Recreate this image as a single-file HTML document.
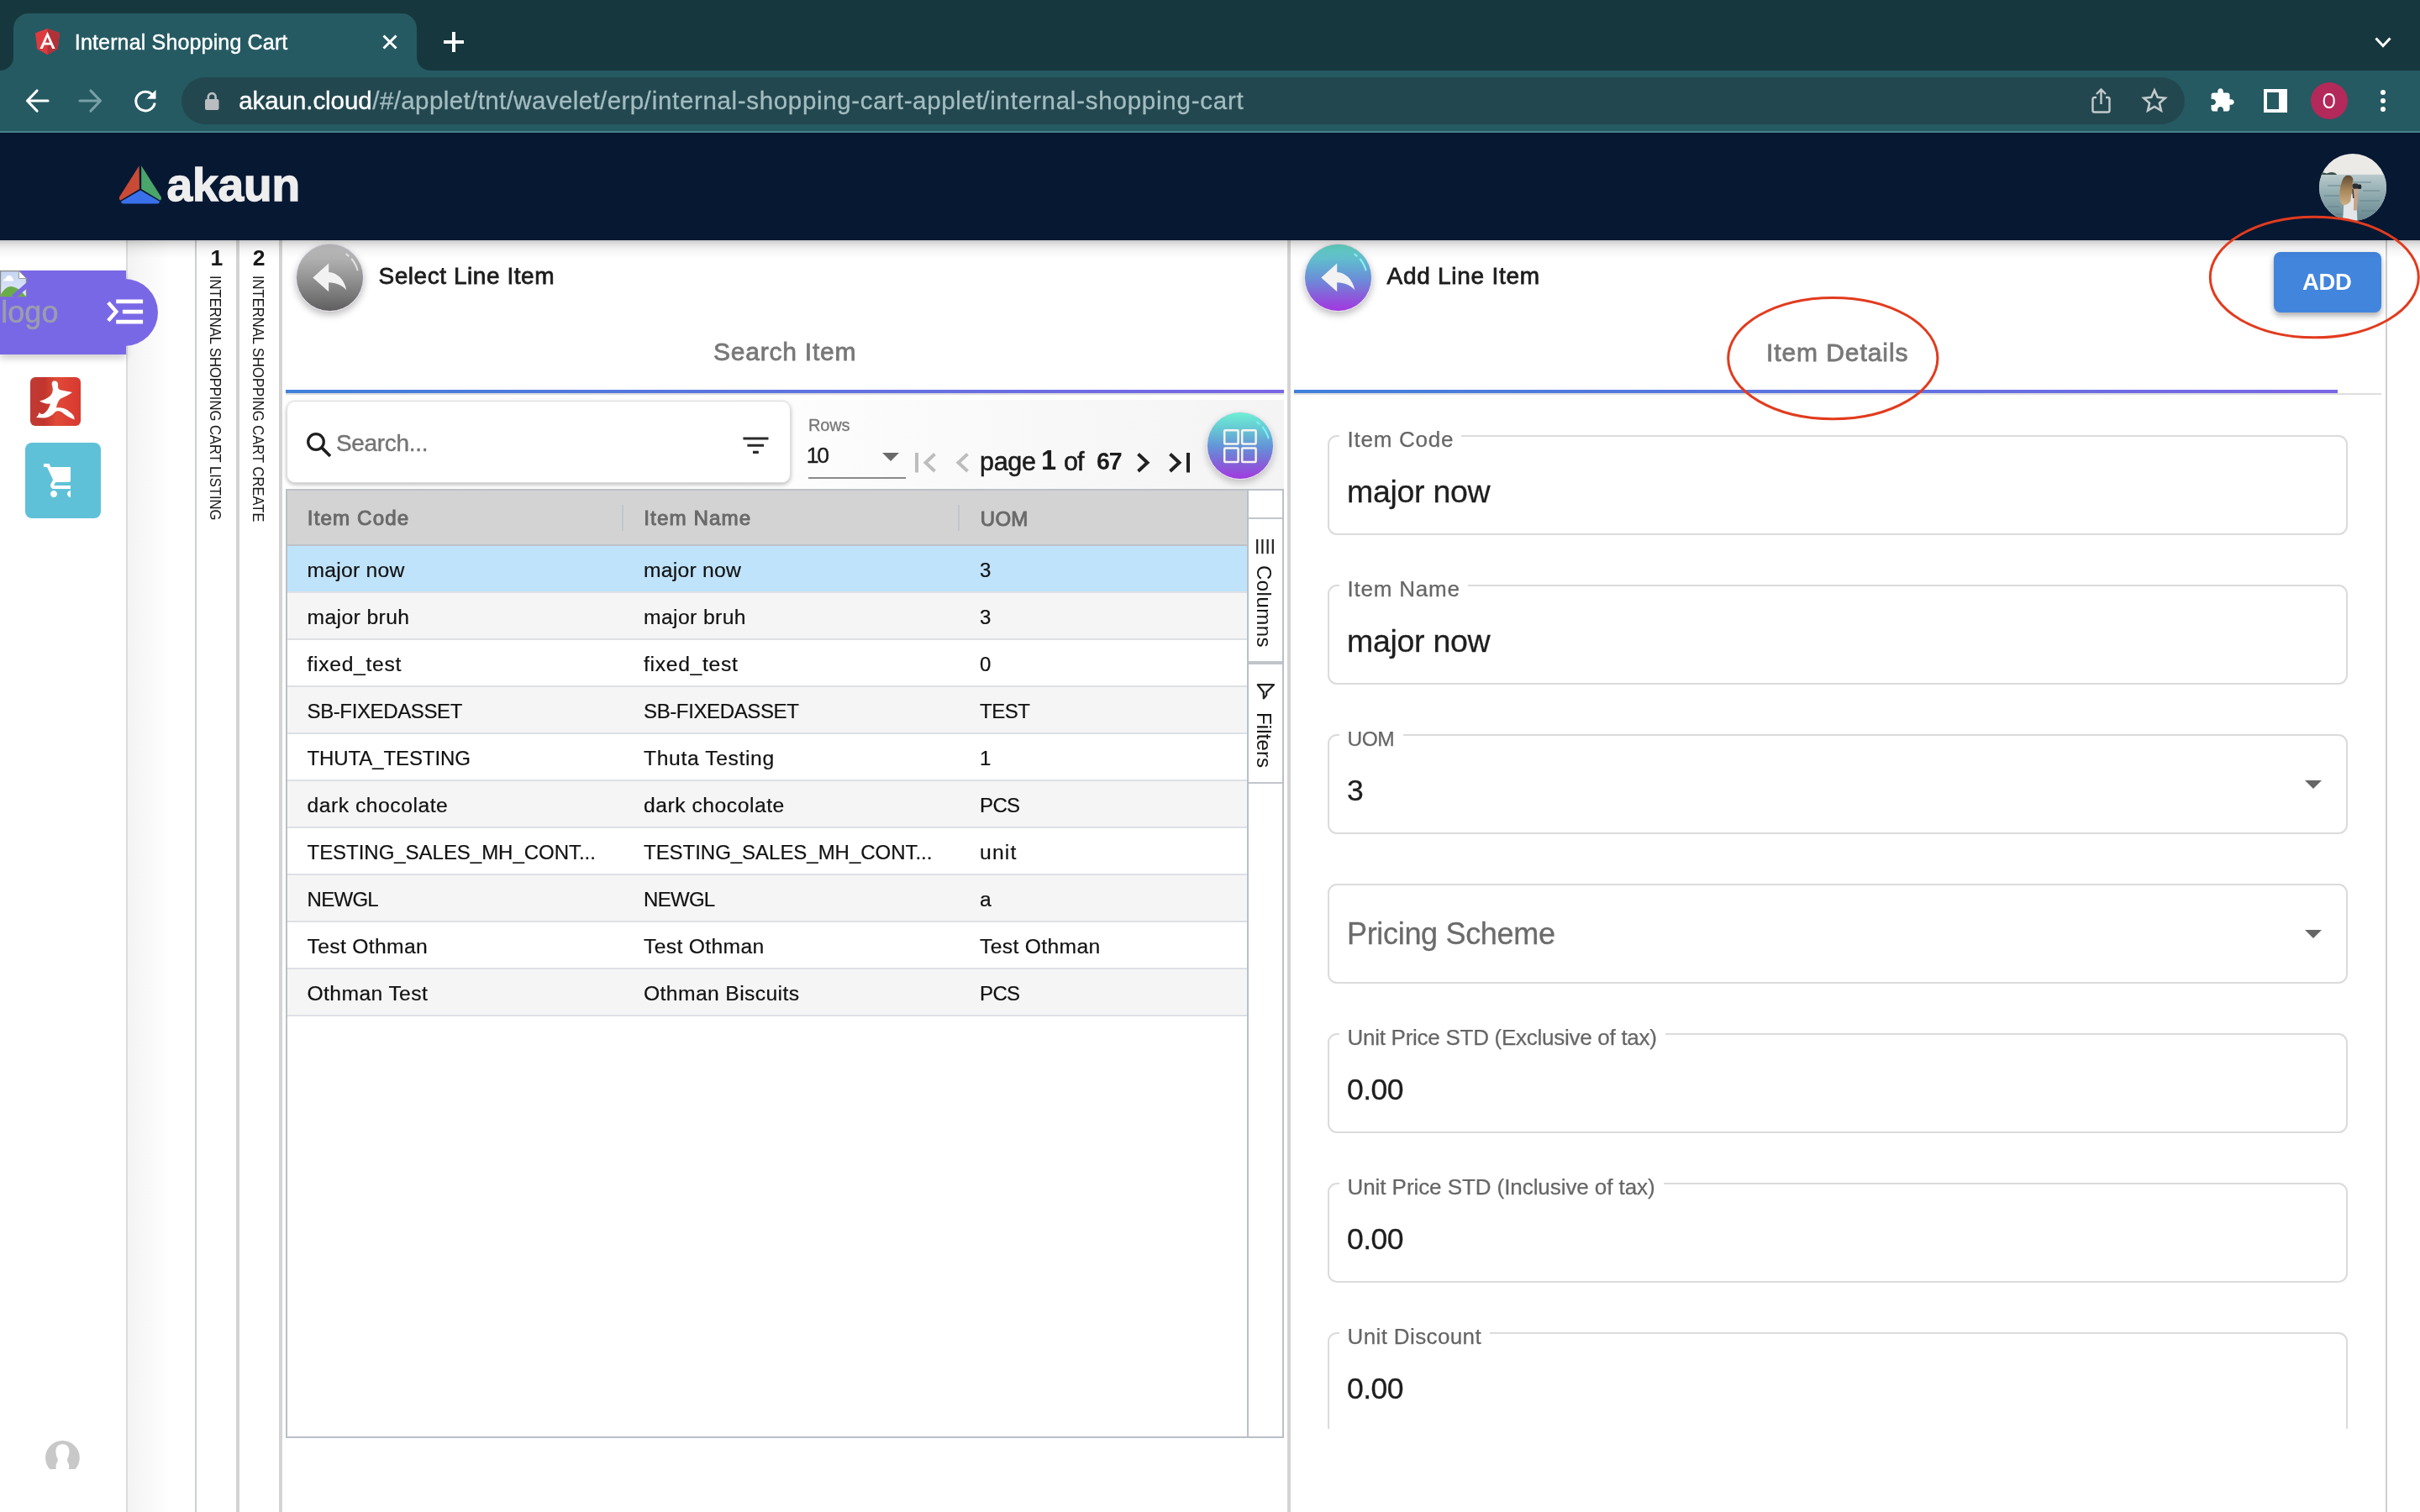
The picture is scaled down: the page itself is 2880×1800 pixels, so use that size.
<!DOCTYPE html>
<html lang="en"><head><meta charset="utf-8"><title>Internal Shopping Cart</title><style>
html,body{margin:0;padding:0;}
body{width:2880px;height:1800px;position:relative;overflow:hidden;background:#fff;font-family:"Liberation Sans",sans-serif;}
.a{position:absolute;}
.t{position:absolute;white-space:nowrap;line-height:1;}
#root{position:absolute;left:0;top:0;width:2880px;height:1800px;overflow:hidden;will-change:transform;}
svg{position:absolute;overflow:visible;}
</style></head><body>
<div id="root">
<div class="a" style="left:0px;top:0px;width:2880px;height:84px;background:#17373e;"></div>
<div class="a" style="left:0px;top:84px;width:2880px;height:74px;background:#255a62;"></div>
<div class="a" style="left:0px;top:156px;width:2880px;height:2px;background:#47828a;"></div>
<div class="a" style="left:16px;top:16px;width:480px;height:70px;background:#255a62;border-radius:18px 18px 0 0;"></div>
<svg style="left:0;top:68px" width="16" height="16"><path d="M16 0V16H0A16 16 0 0 0 16 0Z" fill="#255a62"/></svg>
<svg style="left:496px;top:68px" width="16" height="16"><path d="M0 0V16H16A16 16 0 0 1 0 0Z" fill="#255a62"/></svg>
<svg style="left:41px;top:34px" width="31" height="33" viewBox="0 0 250 266"><path d="M125 0L8 42l18 154 99 55 99-55 18-154z" fill="#dd3a3f"/><path d="M125 0v251l99-55 18-154z" fill="#b13138"/><path d="M125 30L52 194h27l15-37h62l15 37h27L125 30zm21 105h-43l22-52 21 52z" fill="#fff"/></svg>
<span class="t" style="left:88.8px;top:37.6px;font-size:25px;color:#fff;letter-spacing:0.16px;-webkit-text-stroke:0.45px #fff;">Internal Shopping Cart</span>
<svg style="left:455px;top:41px" width="18" height="18"><path d="M1.5 1.5L16.5 16.5M16.5 1.5L1.5 16.5" stroke="#fff" stroke-width="3" fill="none"/></svg>
<svg style="left:528px;top:38px" width="24" height="24"><path d="M12 0V24M0 12H24" stroke="#fff" stroke-width="4" fill="none"/></svg>
<svg style="left:2826px;top:44px" width="20" height="13"><path d="M1.5 1.5L10 10.5L18.5 1.5" stroke="#fff" stroke-width="3" fill="none"/></svg>
<svg style="left:30px;top:106px" width="28" height="28"><path d="M27 14H3M14 2L2.500 14L14 26" stroke="#fff" stroke-width="3.200" fill="none" stroke-linecap="round" stroke-linejoin="round"/></svg>
<svg style="left:94px;top:106px" width="28" height="28"><path d="M1 14H25M14 2L25.500 14L14 26" stroke="#78a0a6" stroke-width="3.200" fill="none" stroke-linecap="round" stroke-linejoin="round"/></svg>
<svg style="left:158px;top:106px" width="29" height="28"><path d="M23.500 7A11.300 11.300 0 1 0 26.200 16.500" stroke="#fff" stroke-width="3" fill="none"/><path d="M27.500 1V11.800H16.700Z" fill="#fff"/></svg>
<div class="a" style="left:216px;top:92px;width:2384px;height:56px;background:#23474f;border-radius:28px;"></div>
<svg style="left:244px;top:109px" width="17" height="23"><rect x="0" y="9" width="16.5" height="13" rx="2" fill="#b9bdc1"/><path d="M3.8 10V6.5a4.4 4.4 0 0 1 8.8 0V10" stroke="#b9bdc1" stroke-width="2.6" fill="none"/></svg>
<span class="t" style="left:284.2px;top:105.4px;font-size:29.5px;color:#fff;letter-spacing:-0.06px;-webkit-text-stroke:0.35px #fff;">akaun.cloud</span>
<span class="t" style="left:443.3px;top:105.4px;font-size:29.5px;color:#a3bcc0;letter-spacing:0.40px;-webkit-text-stroke:0.3px #a3bcc0;">/#/applet/tnt/wavelet/erp/</span>
<span class="t" style="left:775.8px;top:105.4px;font-size:29.5px;color:#a3bcc0;letter-spacing:0.66px;-webkit-text-stroke:0.3px #a3bcc0;">internal-shopping-cart-applet</span>
<span class="t" style="left:1169.3px;top:105.4px;font-size:29.5px;color:#a3bcc0;letter-spacing:0.77px;-webkit-text-stroke:0.3px #a3bcc0;">/internal-shopping-cart</span>
<svg style="left:2489px;top:105px" width="23" height="30"><path d="M6 11H3.5a2 2 0 0 0-2 2V26.5a2 2 0 0 0 2 2h16a2 2 0 0 0 2-2V13a2 2 0 0 0-2-2H17" stroke="#c3cacc" stroke-width="2.4" fill="none"/><path d="M11.5 19V2M6 7L11.5 1.5L17 7" stroke="#c3cacc" stroke-width="2.4" fill="none"/></svg>
<svg style="left:2549px;top:105px" width="30" height="29" viewBox="0 0 30 29"><path d="M15 2.5l3.7 8.3 9 .9-6.8 6 2 8.9L15 22l-7.9 4.6 2-8.9-6.8-6 9-.9z" stroke="#c3cacc" stroke-width="2.6" fill="none" stroke-linejoin="miter"/></svg>
<svg style="left:2629px;top:104px" width="31" height="31" viewBox="0 0 24 24"><path d="M20.5 11H19V7c0-1.1-.9-2-2-2h-4V3.5C13 2.12 11.88 1 10.5 1S8 2.12 8 3.5V5H4c-1.1 0-1.99.9-1.99 2v3.8H3.5c1.49 0 2.7 1.21 2.7 2.7s-1.21 2.7-2.7 2.7H2V20c0 1.1.9 2 2 2h3.8v-1.5c0-1.49 1.21-2.7 2.7-2.7 1.49 0 2.7 1.21 2.7 2.7V22H17c1.1 0 2-.9 2-2v-4h1.5c1.38 0 2.5-1.12 2.5-2.5S21.88 11 20.5 11z" fill="#fff"/></svg>
<div class="a" style="left:2694px;top:106px;width:28px;height:28px;background:#fff;"></div>
<div class="a" style="left:2698px;top:110px;width:13.5px;height:20px;background:#255a62;"></div>
<div class="a" style="left:2750px;top:98px;width:44px;height:44px;background:#b3295a;border-radius:50%;"></div>
<span class="t" style="left:2762.3px;top:108.0px;font-size:25px;color:#fff;transform:scaleX(.82);transform-origin:50% 50%;">O</span>
<div class="a" style="left:2833px;top:107.4px;width:6px;height:6px;background:#fff;border-radius:50%;"></div>
<div class="a" style="left:2833px;top:117.4px;width:6px;height:6px;background:#fff;border-radius:50%;"></div>
<div class="a" style="left:2833px;top:127.4px;width:6px;height:6px;background:#fff;border-radius:50%;"></div>
<div class="a" style="left:0px;top:158px;width:2880px;height:128px;background:#071833;"></div>
<svg style="left:140px;top:195px" width="54" height="50" viewBox="140 195 54 50"><path d="M165.6 197.2 L142.2 234.2 Q141.2 237.5 143.5 238.6 L166 225 Z" fill="#c94a35"/><path d="M168.2 197.2 L191.8 234.4 Q192.6 237.6 190.4 238.6 L168.2 225 Z" fill="#4aa56a"/><path d="M167.1 226.6 L144.2 239.8 Q144 242.4 147 242.6 L187 242.6 Q190 242.4 189.9 239.8 Z" fill="#3a70ea"/></svg>
<span class="t" style="left:198.6px;top:192.6px;font-size:55px;color:#eeeeee;font-weight:bold;letter-spacing:-0.09px;-webkit-text-stroke:1.4px #eeeeee;">akaun</span>
<svg style="left:2760px;top:182.600px" width="80" height="80" viewBox="0 0 80 80"><defs><clipPath id="avc"><circle cx="40" cy="40" r="40"/></clipPath><linearGradient id="sea" x1="0" y1="0" x2="0" y2="1"><stop offset="0" stop-color="#b9cacc"/><stop offset=".35" stop-color="#97b0b4"/><stop offset="1" stop-color="#64868c"/></linearGradient><linearGradient id="hair" x1="0" y1="0" x2="0" y2="1"><stop offset="0" stop-color="#5f4a33"/><stop offset=".5" stop-color="#a8875a"/><stop offset="1" stop-color="#cdb086"/></linearGradient></defs><g clip-path="url(#avc)"><rect width="80" height="80" fill="#eceae6"/><rect y="24.800" width="80" height="56" fill="url(#sea)"/><path d="M0 24.900V23.200Q5 21.600 9 23.600Q14 21 18.500 22.800Q20.500 23.600 21 24.900Z" fill="#3c5148"/><path d="M10 38h16M40 34h22M52 44h20M6 50h18M48 56h24M10 63h14M50 68h18M20 72h12" stroke="#5b7e85" stroke-width="1.600" opacity=".55"/><path d="M28 80L29.500 58Q31 48 36 46.500L44 50L45.500 80Z" fill="#e2e6e8"/><path d="M40.500 41.500L46.500 41L46 52Q45.500 61 44.800 67.500L40.800 67.500Q41.500 57 41 50Z" fill="#c9a287"/><path d="M38.500 34Q42 34 42 38L41 45H38Z" fill="#d9aa8e"/><path d="M33 25.700Q39.500 25 40.500 31Q39 36 39.500 42Q38 50 37.500 56Q35 61 29 61.500Q25 60 24.500 52Q24 40 27.500 32Q29.500 26.500 33 25.700Z" fill="url(#hair)"/><rect x="39.600" y="35.400" width="7" height="6.400" rx="1.800" fill="#2b3034"/><rect x="45.800" y="36.400" width="4.400" height="5.600" rx="1.600" fill="#22272b"/><path d="M40 42L40.800 53" stroke="#2b3034" stroke-width="1.400"/></g></svg>
<div class="a" style="left:150px;top:286px;width:2px;height:1514px;background:#dcdcdc;"></div>
<div class="a" style="left:152px;top:286px;width:50px;height:1514px;background:linear-gradient(90deg,#f3f3f3,#fff);"></div>
<div class="a" style="left:232px;top:286px;width:2px;height:1514px;background:#cdd0d3;"></div>
<div class="a" style="left:281px;top:286px;width:4px;height:1514px;background:#d4d4d4;"></div>
<div class="a" style="left:332px;top:286px;width:4px;height:1514px;background:#d4d4d4;"></div>
<div class="a" style="left:0px;top:322px;width:150px;height:100px;background:#7968e6;box-shadow:0 5px 8px rgba(0,0,0,.18);"></div>
<div class="a" style="left:108px;top:332px;width:80px;height:80px;background:#7968e6;border-radius:50%;"></div>
<div class="a" style="left:0px;top:322px;width:150px;height:100px;background:#7968e6;"></div>
<svg style="left:0;top:322.400px" width="32" height="31.600" viewBox="0 0 32 31.600"><defs><linearGradient id="bi" x1="0" y1="0" x2="0" y2="1"><stop offset="0" stop-color="#c4d4f2"/><stop offset="1" stop-color="#e2eaf8"/></linearGradient></defs><path d="M.600 .600H22.500L31.400 9.500V31H.600Z" fill="url(#bi)" stroke="#8a8a8a" stroke-width="1.200"/><path d="M22.500 .600V9.500H31.400Z" fill="#fff" stroke="#9a9a9a" stroke-width="1"/><path d="M4 12.400Q4 9.800 6.600 9.800Q7.600 5.600 11 6Q14.600 6 15 9.800Q16.400 10.200 16 12.400Z" fill="#fff"/><path d="M1.200 31V28Q8 17 16 19.600Q24 22 30.800 31Z" fill="#6aac4a"/><path d="M33 17L16 31.600" stroke="#7968e6" stroke-width="5.600"/></svg>
<span class="t" style="left:1.2px;top:353.7px;font-size:36px;color:#9b9dae;letter-spacing:0.05px;-webkit-text-stroke:0.5px #9b9dae;">logo</span>
<svg style="left:124px;top:354px" width="48" height="34"><path d="M4.800 6.200L14.300 16.900L4.800 27.800" stroke="#fff" stroke-width="4.400" fill="none"/><path d="M14.200 4.800H46.100M21.900 17.200H46.100M14.200 29.200H46.100" stroke="#fff" stroke-width="4.800" fill="none"/></svg>
<div class="a" style="left:36px;top:449px;width:60px;height:57.5px;border-radius:6px;background:linear-gradient(90deg,#bf3b35 0%,#c2352d 28%,#e04a37 52%,#dc3f33 80%,#d63a30 100%);"></div>
<svg style="left:36px;top:449px" width="60" height="58" viewBox="0 0 60 58"><path d="M27.5 4.5C31 4 33.5 6 33 9.5C32.6 12.5 33.5 15 37 15.5L50 18C46 21 41 23.5 35.5 26C33 29 31.5 32.5 31 36.5C37 35.5 44 38 47 41.5C51 44 53 47.5 52.5 50.5C47 48.5 42 45.5 38 42C35 39.8 32 39.5 29.5 41.5C26 46 21 48.8 14.5 48.5L7 48C9 46.5 10 44.5 10.5 42C12 44 14 44.5 16 43.5C20 41 22.5 36.5 24 31.5C19.5 32 15 31 11 28.5C15.5 27.5 20 25.5 23.5 22.5C27 19 27.5 14.5 26 10C25.3 7.5 25.8 5.5 27.5 4.5Z" fill="#fff"/></svg>
<div class="a" style="left:30px;top:527px;width:90px;height:90px;background:#5fc1d7;border-radius:8px;"></div>
<svg style="left:50px;top:547.5px;overflow:hidden" width="34.3" height="48" viewBox="0 0 17.15 24"><path d="M7 18c-1.1 0-1.99.9-1.99 2S5.9 22 7 22s2-.9 2-2-.9-2-2-2zM1 2v2h2l3.6 7.59-1.35 2.45c-.16.28-.25.61-.25.96 0 1.1.9 2 2 2h12v-2H7.42c-.14 0-.25-.11-.25-.25l.03-.12.9-1.63h7.45c.75 0 1.41-.41 1.75-1.03l3.58-6.49c.08-.14.12-.31.12-.48 0-.55-.45-1-1-1H5.21l-.94-2H1zm16 16c-1.1 0-1.99.9-1.99 2s.89 2 1.99 2 2-.9 2-2-.9-2-2-2z" fill="#fff"/></svg>
<svg style="left:53.700px;top:1714.500px;overflow:hidden" width="41" height="34.800" viewBox="0 0 41 34.800"><circle cx="20.400" cy="20.400" r="20.400" fill="#c8c8c8"/><path d="M20.400 4.300C25.500 4.300 28.600 8 28.400 13C28.300 16.500 27.600 19 26.400 21C25.600 23 26 24.600 27.200 26.400C28.400 28.400 28.600 31 27.600 36H13.200C12.200 31 12.400 28.400 13.600 26.400C14.800 24.600 15.200 23 14.400 21C13.200 19 12.500 16.500 12.400 13C12.200 8 15.300 4.300 20.400 4.300Z" fill="#fff"/></svg>
<span class="t" style="left:250.5px;top:293.6px;font-size:26.5px;color:#1a1a1a;font-weight:bold;">1</span>
<span class="t" style="left:300.8px;top:293.6px;font-size:26.5px;color:#1a1a1a;font-weight:bold;">2</span>
<span class="t" style="left:263.7px;top:313.5px;font-size:16.6px;color:#1a1a1a;letter-spacing:-0.02px;top:327.6px;transform-origin:0 0;transform:rotate(90deg) scale(1,1.1);">INTERNAL SHOPPING CART LISTING</span>
<span class="t" style="left:315.1px;top:313.5px;font-size:16.6px;color:#1a1a1a;top:327.6px;transform-origin:0 0;transform:rotate(90deg) scale(1,1.1);">INTERNAL SHOPPING CART CREATE</span>
<div class="a" style="left:351.7px;top:289.9px;width:81px;height:81px;border-radius:50%;background:linear-gradient(#c4c4c4,#9a9a9a 45%,#5f5f5f);border:1.3px solid #e0d8e8;box-sizing:border-box;box-shadow:0 4px 8px rgba(0,0,0,.26);"></div><svg style="left:351.7px;top:289.7px" width="81" height="81" viewBox="-40.500 -40.500 81 81"><path d="M-1.300 -6.500C8.800 -5.700 17.300 1.800 19.800 14.900C14.800 9.300 7.800 6.100 -1.300 5.800V16.700L-20.200 0L-1.300 -17.100Z" fill="#f2f2f2"/><path d="M19 -28.400A34.200 34.200 0 0 1 33.200 -8.200" stroke="rgba(255,255,255,.65)" stroke-width="2" fill="none" stroke-dasharray="5 4 40"/></svg>
<span class="t" style="left:450.5px;top:314.6px;font-size:28px;color:#1c1c1c;letter-spacing:0.55px;-webkit-text-stroke:0.8px #1c1c1c;">Select Line Item</span>
<span class="t" style="left:849.0px;top:404.4px;font-size:30px;color:#787878;letter-spacing:0.78px;-webkit-text-stroke:0.8px #787878;">Search Item</span>
<div class="a" style="left:340px;top:464px;width:1188px;height:4px;background:linear-gradient(90deg,#3f80dc,#7a66e6);"></div>
<div class="a" style="left:340px;top:468px;width:1188px;height:1.6px;background:#dcdcdc;"></div>
<div class="a" style="left:340px;top:476px;width:1188px;height:106px;background:linear-gradient(90deg,#fefefe 0%,#fdfdfd 50%,#f4f4f4 100%);"></div>
<div class="a" style="left:341px;top:477.3px;width:600px;height:98px;background:#fff;border-radius:10px;border:1.5px solid #dcdcdc;box-sizing:border-box;box-shadow:0 2px 5px rgba(0,0,0,.26);"></div>
<svg style="left:364px;top:514px" width="31" height="31"><circle cx="12" cy="12" r="9.300" stroke="#1f1f1f" stroke-width="3.300" fill="none"/><path d="M18.600 18.600L29 29" stroke="#1f1f1f" stroke-width="3.700"/></svg>
<span class="t" style="left:400.0px;top:513.9px;font-size:28px;color:#747474;letter-spacing:-0.32px;-webkit-text-stroke:0.4px #747474;">Search...</span>
<svg style="left:884px;top:520px" width="31" height="20"><path d="M.400 2H30.500M5.400 10.200H25M12 18.400H18.800" stroke="#2a2a2a" stroke-width="3.100"/></svg>
<span class="t" style="left:962.0px;top:496.1px;font-size:20px;color:#787878;letter-spacing:-0.17px;-webkit-text-stroke:0.3px #787878;">Rows</span>
<span class="t" style="left:959.8px;top:529.3px;font-size:26.5px;color:#1c1c1c;-webkit-text-stroke:0.4px #1c1c1c;letter-spacing:-2.2px;">10</span>
<svg style="left:1050px;top:539.400px" width="20" height="10"><path d="M0 0H20L10 10Z" fill="#6a6a6a"/></svg>
<div class="a" style="left:962px;top:568px;width:116px;height:2px;background:#8a8a8a;"></div>
<svg style="left:1089px;top:539px" width="26" height="24"><path d="M2 0V23.500" stroke="#bdbdbd" stroke-width="4"/><path d="M23.500 1.500L12.500 11.700L23.500 22" stroke="#bdbdbd" stroke-width="4" fill="none"/></svg>
<svg style="left:1137px;top:539px" width="17" height="24"><path d="M14.500 1.500L3.500 11.700L14.500 22" stroke="#bdbdbd" stroke-width="4" fill="none"/></svg>
<span class="t" style="left:1166.0px;top:533.6px;font-size:30.5px;color:#1c1c1c;letter-spacing:-0.29px;-webkit-text-stroke:0.55px #1c1c1c;">page</span>
<span class="t" style="left:1239.0px;top:531.9px;font-size:32.5px;color:#1c1c1c;font-weight:bold;">1</span>
<span class="t" style="left:1266.0px;top:533.6px;font-size:30.5px;color:#1c1c1c;letter-spacing:-0.94px;-webkit-text-stroke:0.55px #1c1c1c;">of</span>
<span class="t" style="left:1305.0px;top:535.2px;font-size:28.6px;color:#1c1c1c;font-weight:bold;letter-spacing:-1.21px;">67</span>
<svg style="left:1352px;top:539px" width="17" height="24"><path d="M2.500 1.500L13.500 11.700L2.500 22" stroke="#222" stroke-width="4" fill="none"/></svg>
<svg style="left:1390px;top:539px" width="27" height="24"><path d="M2.500 1.500L13.500 11.700L2.500 22" stroke="#222" stroke-width="4" fill="none"/><path d="M24 0V23.500" stroke="#222" stroke-width="4"/></svg>
<div class="a" style="left:1435.7px;top:490.2px;width:80.6px;height:80.6px;border-radius:50%;background:linear-gradient(#6ef0d4 0%,#66c8d4 25%,#6492d8 52%,#8460d8 78%,#a23ae0 100%);border:1.3px solid #e6dcee;box-sizing:border-box;box-shadow:0 4px 8px rgba(0,0,0,.22);"></div>
<svg style="left:1455px;top:510px" width="42" height="42"><rect x="2.2" y="2.2" width="16.400" height="16.400" stroke="#f8f4f0" stroke-width="2.500" fill="none" rx="1"/><rect x="2.2" y="23.6" width="16.400" height="16.400" stroke="#f8f4f0" stroke-width="2.500" fill="none" rx="1"/><rect x="23.2" y="2.2" width="16.400" height="16.400" stroke="#f8f4f0" stroke-width="2.500" fill="none" rx="1"/><rect x="23.2" y="23.6" width="16.400" height="16.400" stroke="#f8f4f0" stroke-width="2.500" fill="none" rx="1"/></svg>
<svg style="left:1435.700px;top:490.200px" width="81" height="81" viewBox="-40.500 -40.500 81 81"><path d="M19 -28.400A34.200 34.200 0 0 1 33.200 -8.200" stroke="#7ef0f5" stroke-width="2" fill="none" stroke-dasharray="5 4 40"/></svg>
<div class="a" style="left:340px;top:582px;width:1188px;height:1130px;border:2px solid #bac0c6;box-sizing:border-box;background:#fff;"></div>
<div class="a" style="left:342px;top:584px;width:1142px;height:64px;background:#d3d3d3;"></div>
<div class="a" style="left:342px;top:648px;width:1142px;height:2px;background:#bcc1c6;"></div>
<div class="a" style="left:740px;top:601px;width:2px;height:31px;background:#c2c6cb;"></div>
<div class="a" style="left:1140px;top:601px;width:2px;height:31px;background:#c2c6cb;"></div>
<span class="t" style="left:365.8px;top:605.3px;font-size:24.2px;color:#6a6a6a;letter-spacing:1.11px;-webkit-text-stroke:1px #6a6a6a;">Item Code</span>
<span class="t" style="left:766.3px;top:605.3px;font-size:24.2px;color:#6a6a6a;letter-spacing:1.09px;-webkit-text-stroke:1px #6a6a6a;">Item Name</span>
<span class="t" style="left:1166.8px;top:605.5px;font-size:24px;color:#6a6a6a;letter-spacing:0.25px;-webkit-text-stroke:1px #6a6a6a;">UOM</span>
<div class="a" style="left:342px;top:650px;width:1142px;height:54px;background:#bfe3fb;"></div>
<div class="a" style="left:342px;top:704px;width:1142px;height:2px;background:#dde1e6;"></div>
<span class="t" style="left:365.5px;top:666.6px;font-size:24.7px;color:#111;letter-spacing:0.24px;-webkit-text-stroke:0.2px #111;">major now</span>
<span class="t" style="left:766.0px;top:666.6px;font-size:24.7px;color:#111;letter-spacing:0.24px;-webkit-text-stroke:0.2px #111;">major now</span>
<span class="t" style="left:1166.0px;top:667.2px;font-size:24px;color:#111;-webkit-text-stroke:0.2px #111;">3</span>
<div class="a" style="left:342px;top:706px;width:1142px;height:54px;background:#f5f5f5;"></div>
<div class="a" style="left:342px;top:760px;width:1142px;height:2px;background:#dde1e6;"></div>
<span class="t" style="left:365.5px;top:722.6px;font-size:24.7px;color:#111;letter-spacing:0.39px;-webkit-text-stroke:0.2px #111;">major bruh</span>
<span class="t" style="left:766.0px;top:722.6px;font-size:24.7px;color:#111;letter-spacing:0.39px;-webkit-text-stroke:0.2px #111;">major bruh</span>
<span class="t" style="left:1166.0px;top:723.2px;font-size:24px;color:#111;-webkit-text-stroke:0.2px #111;">3</span>
<div class="a" style="left:342px;top:762px;width:1142px;height:54px;background:#fff;"></div>
<div class="a" style="left:342px;top:816px;width:1142px;height:2px;background:#dde1e6;"></div>
<span class="t" style="left:365.5px;top:778.6px;font-size:24.7px;color:#111;letter-spacing:0.69px;-webkit-text-stroke:0.2px #111;">fixed_test</span>
<span class="t" style="left:766.0px;top:778.6px;font-size:24.7px;color:#111;letter-spacing:0.69px;-webkit-text-stroke:0.2px #111;">fixed_test</span>
<span class="t" style="left:1166.0px;top:779.2px;font-size:24px;color:#111;-webkit-text-stroke:0.2px #111;">0</span>
<div class="a" style="left:342px;top:818px;width:1142px;height:54px;background:#f5f5f5;"></div>
<div class="a" style="left:342px;top:872px;width:1142px;height:2px;background:#dde1e6;"></div>
<span class="t" style="left:365.5px;top:835.2px;font-size:24px;color:#111;letter-spacing:-0.38px;-webkit-text-stroke:0.2px #111;">SB-FIXEDASSET</span>
<span class="t" style="left:766.0px;top:835.2px;font-size:24px;color:#111;letter-spacing:-0.38px;-webkit-text-stroke:0.2px #111;">SB-FIXEDASSET</span>
<span class="t" style="left:1166.0px;top:835.2px;font-size:24px;color:#111;letter-spacing:-0.45px;-webkit-text-stroke:0.2px #111;">TEST</span>
<div class="a" style="left:342px;top:874px;width:1142px;height:54px;background:#fff;"></div>
<div class="a" style="left:342px;top:928px;width:1142px;height:2px;background:#dde1e6;"></div>
<span class="t" style="left:365.5px;top:891.2px;font-size:24px;color:#111;letter-spacing:-0.10px;-webkit-text-stroke:0.2px #111;">THUTA_TESTING</span>
<span class="t" style="left:766.0px;top:890.6px;font-size:24.7px;color:#111;letter-spacing:0.62px;-webkit-text-stroke:0.2px #111;">Thuta Testing</span>
<span class="t" style="left:1166.0px;top:891.2px;font-size:24px;color:#111;-webkit-text-stroke:0.2px #111;">1</span>
<div class="a" style="left:342px;top:930px;width:1142px;height:54px;background:#f5f5f5;"></div>
<div class="a" style="left:342px;top:984px;width:1142px;height:2px;background:#dde1e6;"></div>
<span class="t" style="left:365.5px;top:946.6px;font-size:24.7px;color:#111;letter-spacing:0.52px;-webkit-text-stroke:0.2px #111;">dark chocolate</span>
<span class="t" style="left:766.0px;top:946.6px;font-size:24.7px;color:#111;letter-spacing:0.52px;-webkit-text-stroke:0.2px #111;">dark chocolate</span>
<span class="t" style="left:1166.0px;top:947.2px;font-size:24px;color:#111;letter-spacing:-0.63px;-webkit-text-stroke:0.2px #111;">PCS</span>
<div class="a" style="left:342px;top:986px;width:1142px;height:54px;background:#fff;"></div>
<div class="a" style="left:342px;top:1040px;width:1142px;height:2px;background:#dde1e6;"></div>
<span class="t" style="left:365.5px;top:1003.2px;font-size:24px;color:#111;letter-spacing:-0.03px;-webkit-text-stroke:0.2px #111;">TESTING_SALES_MH_CONT...</span>
<span class="t" style="left:766.0px;top:1003.2px;font-size:24px;color:#111;letter-spacing:-0.03px;-webkit-text-stroke:0.2px #111;">TESTING_SALES_MH_CONT...</span>
<span class="t" style="left:1166.0px;top:1002.6px;font-size:24.7px;color:#111;letter-spacing:1.16px;-webkit-text-stroke:0.2px #111;">unit</span>
<div class="a" style="left:342px;top:1042px;width:1142px;height:54px;background:#f5f5f5;"></div>
<div class="a" style="left:342px;top:1096px;width:1142px;height:2px;background:#dde1e6;"></div>
<span class="t" style="left:365.5px;top:1059.2px;font-size:24px;color:#111;letter-spacing:-0.70px;-webkit-text-stroke:0.2px #111;">NEWGL</span>
<span class="t" style="left:766.0px;top:1059.2px;font-size:24px;color:#111;letter-spacing:-0.70px;-webkit-text-stroke:0.2px #111;">NEWGL</span>
<span class="t" style="left:1166.0px;top:1058.6px;font-size:24.7px;color:#111;-webkit-text-stroke:0.2px #111;">a</span>
<div class="a" style="left:342px;top:1098px;width:1142px;height:54px;background:#fff;"></div>
<div class="a" style="left:342px;top:1152px;width:1142px;height:2px;background:#dde1e6;"></div>
<span class="t" style="left:365.5px;top:1114.6px;font-size:24.7px;color:#111;letter-spacing:0.33px;-webkit-text-stroke:0.2px #111;">Test Othman</span>
<span class="t" style="left:766.0px;top:1114.6px;font-size:24.7px;color:#111;letter-spacing:0.33px;-webkit-text-stroke:0.2px #111;">Test Othman</span>
<span class="t" style="left:1166.0px;top:1114.6px;font-size:24.7px;color:#111;letter-spacing:0.33px;-webkit-text-stroke:0.2px #111;">Test Othman</span>
<div class="a" style="left:342px;top:1154px;width:1142px;height:54px;background:#f5f5f5;"></div>
<div class="a" style="left:342px;top:1208px;width:1142px;height:2px;background:#dde1e6;"></div>
<span class="t" style="left:365.5px;top:1170.6px;font-size:24.7px;color:#111;letter-spacing:0.38px;-webkit-text-stroke:0.2px #111;">Othman Test</span>
<span class="t" style="left:766.0px;top:1170.6px;font-size:24.7px;color:#111;letter-spacing:0.38px;-webkit-text-stroke:0.2px #111;">Othman Biscuits</span>
<span class="t" style="left:1166.0px;top:1171.2px;font-size:24px;color:#111;letter-spacing:-0.63px;-webkit-text-stroke:0.2px #111;">PCS</span>
<div class="a" style="left:1484px;top:584px;width:2px;height:1126px;background:#b9c0c7;"></div>
<div class="a" style="left:1486px;top:616px;width:40px;height:2px;background:#c0c6cc;"></div>
<div class="a" style="left:1486px;top:787px;width:40px;height:4px;background:#bfc5ca;"></div>
<div class="a" style="left:1486px;top:931px;width:40px;height:2px;background:#c0c6cc;"></div>
<svg style="left:1495px;top:641.500px" width="22" height="18"><path d="M1.200 0V17.200M7.400 0V17.200M13.600 0V17.200M19.800 0V17.200" stroke="#222" stroke-width="2.200"/></svg>
<span class="t" style="left:1515.8px;top:-20.3px;font-size:24px;color:#151515;letter-spacing:0.47px;top:672.5px;transform-origin:0 0;transform:rotate(90deg);">Columns</span>
<svg style="left:1494.500px;top:812.500px" width="23" height="21"><path d="M1.800 2.200H21L12.200 11V14.600L8.800 18.400V11Z" stroke="#222" stroke-width="2.200" fill="none" stroke-linejoin="round"/></svg>
<span class="t" style="left:1515.8px;top:-20.3px;font-size:24px;color:#151515;letter-spacing:0.11px;top:847.8px;transform-origin:0 0;transform:rotate(90deg);">Filters</span>
<div class="a" style="left:1532px;top:286px;width:4px;height:1514px;background:#d4d4d4;"></div>
<div class="a" style="left:2839px;top:286px;width:2px;height:1514px;background:#cfcfcf;"></div>
<div class="a" style="left:1551.5px;top:289.9px;width:81px;height:81px;border-radius:50%;background:linear-gradient(#62d8c4 0%,#62b4d0 28%,#6a8fd8 52%,#8a5cda 78%,#a238e0 100%);border:1.3px solid #e0d8e8;box-sizing:border-box;box-shadow:0 4px 8px rgba(0,0,0,.26);"></div><svg style="left:1551.5px;top:289.7px" width="81" height="81" viewBox="-40.500 -40.500 81 81"><path d="M-1.300 -6.500C8.800 -5.700 17.300 1.800 19.800 14.900C14.800 9.300 7.800 6.100 -1.300 5.800V16.700L-20.200 0L-1.300 -17.100Z" fill="#f2f2f2"/><path d="M19 -28.400A34.200 34.200 0 0 1 33.200 -8.200" stroke="#8ef0f2" stroke-width="2" fill="none" stroke-dasharray="5 4 40"/></svg>
<span class="t" style="left:1650.5px;top:314.6px;font-size:28px;color:#1c1c1c;letter-spacing:0.73px;-webkit-text-stroke:0.8px #1c1c1c;">Add Line Item</span>
<span class="t" style="left:2102.0px;top:404.6px;font-size:30px;color:#787878;letter-spacing:0.92px;-webkit-text-stroke:0.8px #787878;">Item Details</span>
<div class="a" style="left:1540px;top:468px;width:1294px;height:2px;background:#dedede;"></div>
<div class="a" style="left:1540px;top:464px;width:1242px;height:4px;background:linear-gradient(90deg,#3f80dc,#7a66e6);"></div>
<div class="a" style="left:2706px;top:300px;width:128px;height:72px;background:#4285dd;border-radius:8px;box-shadow:0 4px 7px rgba(0,0,0,.32);"></div>
<span class="t" style="left:2740.0px;top:321.7px;font-size:27.5px;color:#fff;font-weight:bold;letter-spacing:-0.30px;">ADD</span>
<div class="a" style="left:1580px;top:518px;width:1214px;height:119px;border:2px solid #dbdbdb;box-sizing:border-box;border-radius:11px;"></div><div class="a" style="left:1594px;top:516px;width:145.4px;height:6px;background:#fff;"></div><span class="t" style="left:1603.5px;top:510.2px;font-size:26px;color:#666;letter-spacing:0.74px;-webkit-text-stroke:0.25px #666;">Item Code</span><span class="t" style="left:1603.0px;top:566.6px;font-size:37.5px;color:#1e1e1e;letter-spacing:-0.30px;-webkit-text-stroke:0.3px #1e1e1e;">major now</span>
<div class="a" style="left:1580px;top:696px;width:1214px;height:119px;border:2px solid #dbdbdb;box-sizing:border-box;border-radius:11px;"></div><div class="a" style="left:1594px;top:694px;width:153px;height:6px;background:#fff;"></div><span class="t" style="left:1603.5px;top:688.2px;font-size:26px;color:#666;letter-spacing:0.79px;-webkit-text-stroke:0.25px #666;">Item Name</span><span class="t" style="left:1603.0px;top:744.6px;font-size:37.5px;color:#1e1e1e;letter-spacing:-0.30px;-webkit-text-stroke:0.3px #1e1e1e;">major now</span>
<div class="a" style="left:1580px;top:874px;width:1214px;height:119px;border:2px solid #dbdbdb;box-sizing:border-box;border-radius:11px;"></div><div class="a" style="left:1594px;top:872px;width:75.8px;height:6px;background:#fff;"></div><span class="t" style="left:1603.5px;top:867.5px;font-size:24.5px;color:#666;letter-spacing:-0.44px;-webkit-text-stroke:0.25px #666;">UOM</span><span class="t" style="left:1603.0px;top:924.2px;font-size:35.5px;color:#1e1e1e;-webkit-text-stroke:0.3px #1e1e1e;">3</span><svg style="left:2742.600px;top:929px" width="20" height="10"><path d="M0 0H20L10 10Z" fill="#666"/></svg>
<div class="a" style="left:1580px;top:1052px;width:1214px;height:119px;border:2px solid #dbdbdb;box-sizing:border-box;border-radius:11px;"></div><span class="t" style="left:1603.0px;top:1094.2px;font-size:36px;color:#6b6b6b;letter-spacing:-0.32px;-webkit-text-stroke:0.3px #6b6b6b;">Pricing Scheme</span><svg style="left:2742.600px;top:1107px" width="20" height="10"><path d="M0 0H20L10 10Z" fill="#666"/></svg>
<div class="a" style="left:1580px;top:1230px;width:1214px;height:119px;border:2px solid #dbdbdb;box-sizing:border-box;border-radius:11px;"></div><div class="a" style="left:1594px;top:1228px;width:388px;height:6px;background:#fff;"></div><span class="t" style="left:1603.5px;top:1222.2px;font-size:26px;color:#666;letter-spacing:-0.27px;-webkit-text-stroke:0.25px #666;">Unit Price STD (Exclusive of tax)</span><span class="t" style="left:1603.0px;top:1280.2px;font-size:35.5px;color:#1e1e1e;letter-spacing:-0.53px;-webkit-text-stroke:0.3px #1e1e1e;">0.00</span>
<div class="a" style="left:1580px;top:1408px;width:1214px;height:119px;border:2px solid #dbdbdb;box-sizing:border-box;border-radius:11px;"></div><div class="a" style="left:1594px;top:1406px;width:385.6px;height:6px;background:#fff;"></div><span class="t" style="left:1603.5px;top:1400.2px;font-size:26px;color:#666;letter-spacing:-0.07px;-webkit-text-stroke:0.25px #666;">Unit Price STD (Inclusive of tax)</span><span class="t" style="left:1603.0px;top:1458.2px;font-size:35.5px;color:#1e1e1e;letter-spacing:-0.53px;-webkit-text-stroke:0.3px #1e1e1e;">0.00</span>
<div class="a" style="left:1580px;top:1586px;width:1214px;height:115px;border:2px solid #dbdbdb;box-sizing:border-box;border-radius:11px 11px 0 0;border-bottom:none;"></div><div class="a" style="left:1594px;top:1584px;width:178.7px;height:6px;background:#fff;"></div><span class="t" style="left:1603.5px;top:1578.2px;font-size:26px;color:#666;letter-spacing:0.38px;-webkit-text-stroke:0.25px #666;">Unit Discount</span><span class="t" style="left:1603.0px;top:1636.2px;font-size:35.5px;color:#1e1e1e;letter-spacing:-0.53px;-webkit-text-stroke:0.3px #1e1e1e;">0.00</span>
<div class="a" style="left:0px;top:286px;width:2880px;height:22px;background:linear-gradient(rgba(0,0,0,.22) 0%,rgba(0,0,0,.13) 18%,rgba(0,0,0,.06) 42%,rgba(0,0,0,.022) 68%,rgba(0,0,0,0) 100%);"></div>
<svg style="left:0;top:0" width="2880" height="1800"><ellipse cx="2181.300" cy="426.600" rx="124.600" ry="72.200" stroke="#e23b1e" stroke-width="3" fill="none"/><ellipse cx="2754.300" cy="330" rx="124" ry="71.800" stroke="#e23b1e" stroke-width="3" fill="none"/></svg>
</div>
</body></html>
